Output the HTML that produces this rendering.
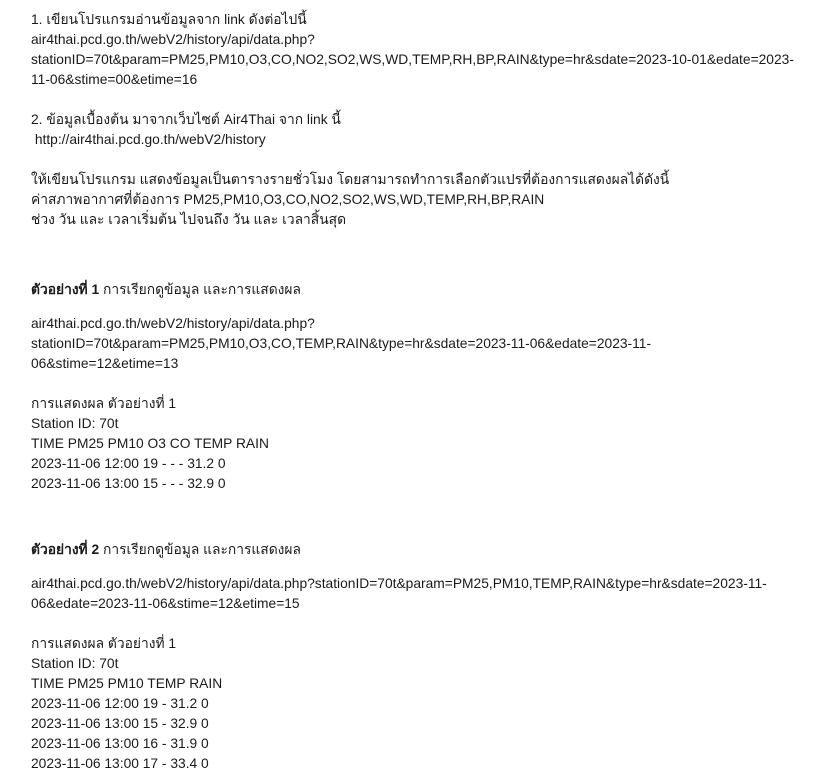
<!DOCTYPE html>
<html><head><meta charset="utf-8"><style>
body{margin:0;width:822px;height:778px;background:#fff;font-family:"Liberation Sans","DejaVu Sans",sans-serif;font-size:13.8px;color:#1a1a1a;}
.b{position:absolute;left:31px;line-height:20px;white-space:nowrap;}
</style></head><body>
<div class="b" style="top:10px">1. เขียนโปรแกรมอ่านข้อมูลจาก link ดังต่อไปนี้<br>air4thai.pcd.go.th/webV2/history/api/data.php?<br>stationID=70t&amp;param=PM25,PM10,O3,CO,NO2,SO2,WS,WD,TEMP,RH,BP,RAIN&amp;type=hr&amp;sdate=2023-10-01&amp;edate=2023-<br>11-06&amp;stime=00&amp;etime=16</div>
<div class="b" style="top:110px">2. ข้อมูลเบื้องต้น มาจากเว็บไซต์ Air4Thai จาก link นี้<br>&nbsp;http://air4thai.pcd.go.th/webV2/history</div>
<div class="b" style="top:170px">ให้เขียนโปรแกรม แสดงข้อมูลเป็นตารางรายชั่วโมง โดยสามารถทำการเลือกตัวแปรที่ต้องการแสดงผลได้ดังนี้<br>ค่าสภาพอากาศที่ต้องการ PM25,PM10,O3,CO,NO2,SO2,WS,WD,TEMP,RH,BP,RAIN<br>ช่วง วัน และ เวลาเริ่มต้น ไปจนถึง วัน และ เวลาสิ้นสุด</div>
<div class="b" style="top:280px"><b>ตัวอย่างที่ 1</b> การเรียกดูข้อมูล และการแสดงผล</div>
<div class="b" style="top:314px">air4thai.pcd.go.th/webV2/history/api/data.php?<br>stationID=70t&amp;param=PM25,PM10,O3,CO,TEMP,RAIN&amp;type=hr&amp;sdate=2023-11-06&amp;edate=2023-11-<br>06&amp;stime=12&amp;etime=13</div>
<div class="b" style="top:394px">การแสดงผล ตัวอย่างที่ 1<br>Station ID: 70t<br>TIME PM25 PM10 O3 CO TEMP RAIN<br>2023-11-06 12:00 19 - - - 31.2 0<br>2023-11-06 13:00 15 - - - 32.9 0</div>
<div class="b" style="top:540px"><b>ตัวอย่างที่ 2</b> การเรียกดูข้อมูล และการแสดงผล</div>
<div class="b" style="top:574px">air4thai.pcd.go.th/webV2/history/api/data.php?stationID=70t&amp;param=PM25,PM10,TEMP,RAIN&amp;type=hr&amp;sdate=2023-11-<br>06&amp;edate=2023-11-06&amp;stime=12&amp;etime=15</div>
<div class="b" style="top:634px">การแสดงผล ตัวอย่างที่ 1<br>Station ID: 70t<br>TIME PM25 PM10 TEMP RAIN<br>2023-11-06 12:00 19 - 31.2 0<br>2023-11-06 13:00 15 - 32.9 0<br>2023-11-06 13:00 16 - 31.9 0<br>2023-11-06 13:00 17 - 33.4 0</div>
</body></html>
